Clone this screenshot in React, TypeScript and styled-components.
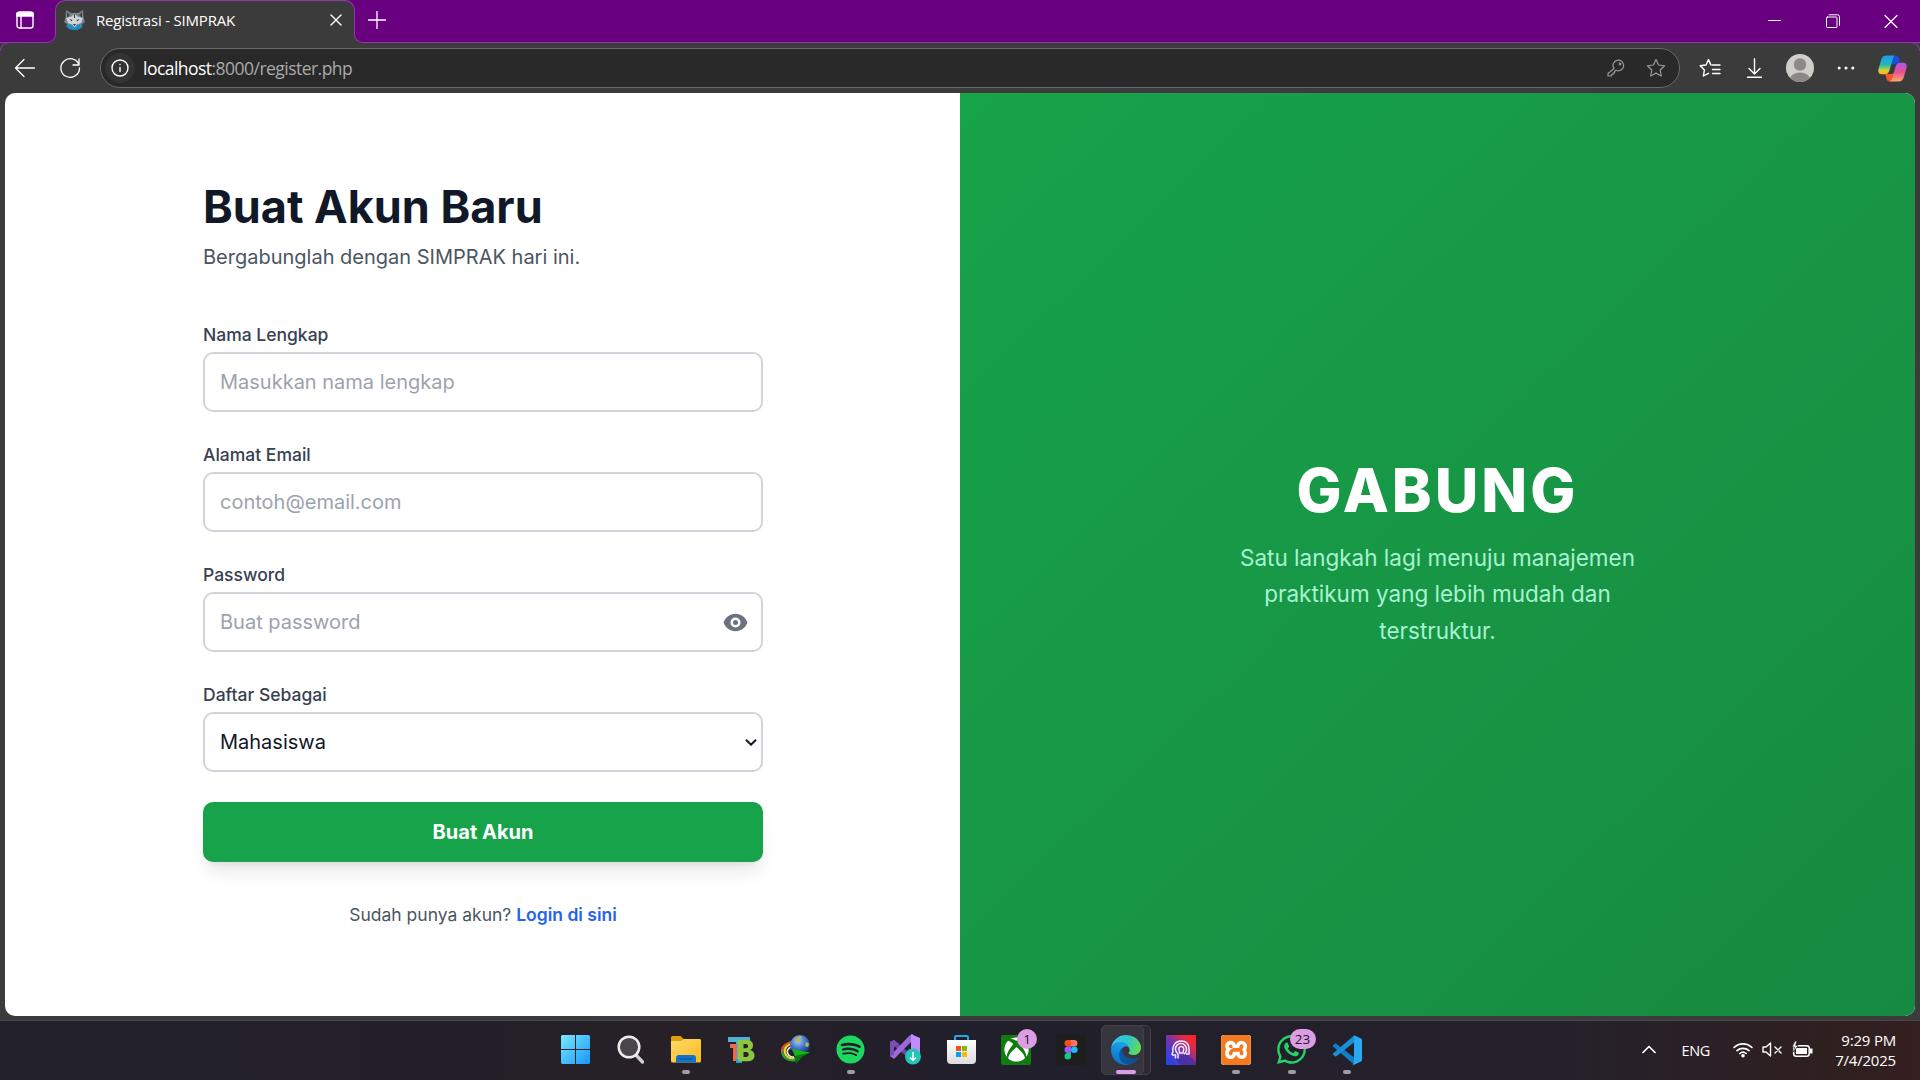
import React from "react";
import styled, { createGlobalStyle } from "styled-components";
import { FaSpotify, FaWhatsapp, FaXbox } from "react-icons/fa";
import { SiXampp } from "react-icons/si";

const GlobalStyle = createGlobalStyle`
  *, *::before, *::after { box-sizing: border-box; }
  body { margin: 0; background: #3b3b3b; overflow: hidden; }
  svg { display: block; flex: none; }
`;

const systemFont = `"Open Sans", "Noto Sans", sans-serif`;
const accent = "#690080";
const accentLine = "#8f3aa6";
const chrome = "#3b3b3b";

const Screen = styled.div`
  width: 1920px;
  height: 1080px;
  display: flex;
  flex-direction: column;
  background: ${chrome};
  font-family: ${systemFont};
  color: #fff;
`;

/* ---------- browser chrome ---------- */

const TitleBar = styled.header`
  height: 43px;
  display: flex;
  background: ${chrome};
`;

const TabActions = styled.div`
  width: 56px;
  height: 43px;
  padding: 11px 0 0 16px;
  background: ${accent};
  border: solid ${accentLine};
  border-width: 0 1px 1px 0;
  border-bottom-right-radius: 9px;
`;

const TabSlot = styled.div`
  position: relative;
  width: 300px;
  height: 34px;
  margin: 0 -1px;
  background: ${accent};
`;

const Tab = styled.div`
  height: 34px;
  display: flex;
  align-items: center;
  padding: 5px 12px 0 8px;
  background: ${chrome};
  border: solid ${accentLine};
  border-width: 1px 1px 0;
  border-radius: 10px 10px 0 0;
`;

const TabTitle = styled.span`
  flex: 1;
  margin-left: 11px;
  margin-top: -1px;
  font-size: 15px;
  line-height: 20px;
  letter-spacing: -0.2px;
  white-space: nowrap;
`;

const DragArea = styled.div`
  flex: 1;
  height: 43px;
  display: flex;
  justify-content: space-between;
  padding: 11px 22px 0 13px;
  background: ${accent};
  border: solid ${accentLine};
  border-width: 0 0 1px 1px;
  border-bottom-left-radius: 9px;
`;

const WindowControls = styled.div`
  display: flex;
  gap: 44px;
  padding-top: 3px;
`;

const Toolbar = styled.div`
  position: relative;
  height: 50px;
  display: flex;
  align-items: center;
  padding: 0 13px 0 14px;

  &::before, &::after {
    content: "";
    position: absolute;
    top: -1px;
    width: 9px;
    height: 9px;
    background: ${chrome};
    border-top: 1px solid ${accentLine};
  }
  &::before { left: 0; border-left: 1px solid ${accentLine}; border-top-left-radius: 9px; }
  &::after { right: 0; border-right: 1px solid ${accentLine}; border-top-right-radius: 9px; }
`;

const NavButtons = styled.div`
  display: flex;
  gap: 23px;
  margin-right: 19px;
`;

const AddressBar = styled.div`
  width: 1580px;
  height: 40px;
  display: flex;
  align-items: center;
  padding: 0 13px 0 4px;
  background: #292929;
  border: 1px solid #6a6a6a;
  border-radius: 20px;
`;

const SiteInfo = styled.span`
  width: 30px;
  height: 30px;
  display: flex;
  align-items: center;
  justify-content: center;
  border-radius: 50%;
  background: #333;
`;

const Url = styled.span`
  flex: 1;
  margin: -1px 0 0 8px;
  font-size: 17.5px;
  line-height: 24px;
  letter-spacing: -0.53px;
  color: #a9a9a9;
  b { font-weight: 400; color: #fff; }
`;

const AddressIcons = styled.div`
  display: flex;
  align-items: center;
  gap: 21px;
`;

const ToolbarIcons = styled.div`
  flex: 1;
  display: flex;
  align-items: center;
  justify-content: space-between;
  margin-left: 19px;
`;

/* ---------- page ---------- */

const Page = styled.main`
  height: 923px;
  margin: 0 5px;
  display: grid;
  grid-template-columns: 1fr 1fr;
  border-radius: 10px;
  overflow: hidden;
  background: #fff;
  font-family: Inter, sans-serif;
`;

const FormSide = styled.section`
  display: flex;
  flex-direction: column;
  align-items: center;
  justify-content: center;
  padding-left: 1px;
`;

const FormBox = styled.div`
  width: 560px;
`;

const Heading = styled.h1`
  margin: 0;
  font-size: 45px;
  line-height: 50px;
  font-weight: 700;
  color: #111827;
`;

const Subheading = styled.p`
  margin: 10px 0 50px;
  font-size: 20px;
  line-height: 30px;
  color: #4b5563;
`;

const Form = styled.form`
  display: flex;
  flex-direction: column;
  gap: 30px;
`;

const Field = styled.label`
  display: flex;
  flex-direction: column;
  gap: 5px;
`;

const FieldName = styled.span`
  font-size: 17.5px;
  line-height: 25px;
  font-weight: 500;
  color: #374151;
`;

const Control = styled.span<{ $trail: number }>`
  height: 60px;
  display: flex;
  align-items: center;
  padding: 0 ${(p) => p.$trail}px 0 15px;
  border: 2px solid #d1d5db;
  border-radius: 10px;

  input, select {
    flex: 1;
    min-width: 0;
    padding: 0;
    border: 0;
    outline: 0;
    appearance: none;
    background: transparent;
    font: 400 20px/30px Inter, sans-serif;
    color: #111827;
  }
  input::placeholder { color: #9ca3af; opacity: 1; }
`;

const Submit = styled.button`
  height: 60px;
  padding: 0;
  border: 0;
  border-radius: 10px;
  background: #16a34a;
  color: #fff;
  font: 700 20px/30px Inter, sans-serif;
  box-shadow: 0 12.5px 19px -4px rgba(0, 0, 0, 0.1), 0 5px 7.5px -5px rgba(0, 0, 0, 0.1);
`;

const LoginHint = styled.p`
  margin: 40px 0 0;
  text-align: center;
  font-size: 17.5px;
  line-height: 25px;
  color: #4b5563;
  a { font-weight: 600; color: #2563eb; text-decoration: none; }
`;

const Promo = styled.section`
  display: flex;
  flex-direction: column;
  align-items: center;
  justify-content: center;
  text-align: center;
  background: linear-gradient(to bottom right, #17a34a, #178a41);
`;

const PromoTitle = styled.h2`
  margin: 0;
  font-size: 60px;
  line-height: 60px;
  font-weight: 800;
  letter-spacing: 3px;
`;

const PromoText = styled.p`
  width: 400px;
  margin: 20px 0 0;
  font-size: 22.5px;
  line-height: 36.56px;
  color: #a7f3d0;
`;

/* ---------- taskbar ---------- */

const Taskbar = styled.footer`
  height: 60px;
  margin-top: 4px;
  display: grid;
  grid-template-columns: 1fr auto 1fr;
  border-top: 1px solid #48474a;
  background: linear-gradient(90deg, #22212b 0%, #231f28 25%, #272027 34%, #211f2b 50%, #24212b 80%, #2a2027 88%, #30201f 96%, #351f20 100%);
`;

const AppList = styled.nav`
  grid-column: 2;
  display: flex;
  padding-left: 2px;
`;

const AppSlot = styled.div`
  position: relative;
  width: 55.1px;
  height: 57px;
  display: flex;
  align-items: center;
  justify-content: center;
`;

const ActivePlate = styled.span<{ $back?: boolean }>`
  position: absolute;
  top: 4px;
  left: ${(p) => (p.$back ? 9 : 2)}px;
  width: 43px;
  height: 50px;
  border-radius: 5px;
  border: 1px solid #434049;
  background: ${(p) => (p.$back ? "#2b2932" : "#37353d")};
`;

const AppIcon = styled.span`
  position: relative;
  width: 30px;
  height: 30px;
  display: flex;
  align-items: center;
  justify-content: center;
`;

const Indicator = styled.span<{ $active?: boolean }>`
  position: absolute;
  left: 50%;
  bottom: 4px;
  width: ${(p) => (p.$active ? 20 : 8)}px;
  height: 4px;
  transform: translateX(-50%);
  border-radius: 2px;
  background: ${(p) => (p.$active ? "#db9fe6" : "#a09ea4")};
`;

const Badge = styled.span<{ $width: number }>`
  position: absolute;
  top: -6px;
  left: ${(p) => (p.$width > 20 ? 13 : 16)}px;
  width: ${(p) => p.$width}px;
  height: 20px;
  border-radius: 10px;
  background: #dc9de5;
  color: #201824;
  font-size: 13.5px;
  line-height: 20px;
  text-align: center;
`;

const Tray = styled.div`
  grid-column: 3;
  justify-self: end;
  display: flex;
  align-items: center;
  height: 57px;
  padding-right: 24px;
`;

const Language = styled.span`
  margin: 1px 23px 0 26px;
  font-size: 14.5px;
  letter-spacing: -0.3px;
`;

const TrayIcons = styled.div`
  display: flex;
  align-items: center;
  gap: 9px;
  margin-right: 22px;
`;

const Clock = styled.div`
  text-align: right;
  font-size: 15px;
  line-height: 20px;
  letter-spacing: -0.2px;
  white-space: nowrap;
`;

/* ---------- icons ---------- */

type LineProps = { w: number; h: number; color?: string; stroke?: number; children: React.ReactNode };
const Line = ({ w, h, color = "#fff", stroke = 1.3, children }: LineProps) => (
  <svg width={w} height={h} viewBox={`0 0 ${w} ${h}`} fill="none" stroke={color} strokeWidth={stroke} strokeLinecap="round" strokeLinejoin="round">
    {children}
  </svg>
);

const WolfIcon = () => (
  <svg width="21" height="20" viewBox="0 0 21 20">
    <path d="M2 0l5 3h7l5-3 .6 8 1.4 4-3 2-1 4-6.500 2L4 18l-1-4-3-2 1.500-4z" fill="#77858c" />
    <path d="M3 2l3 3-3 3zM18 2l-3 3 3 3z" fill="#3d444b" />
    <path d="M2 15.500l5-1 3.500 2 3.500-2 5 1c-1.500 3-4.500 4.500-8.500 4.500S3.500 18.500 2 15.500z" fill="#1c8fc9" />
    <path d="M10.500 3.500l3 3 5.500 1.500-2 5-4 1.500-2.500 3-2.500-3-4-1.500-2-5 5.500-1.500z" fill="#cfd4d7" />
    <path d="M5.500 9l3 1-1 1.200zM15.500 9l-3 1 1 1.200zM9 14h3l-1.500 2zM10 4h1v4h-1z" fill="#27323a" />
  </svg>
);

const star = "M10 1.500l2.600 5.500 6 .8-4.400 4.200 1.100 6-5.300-2.900-5.300 2.900 1.100-6L1.400 7.800l6-.8z";

const CopilotIcon = () => (
  <svg width="29" height="27" viewBox="0 0 29 27">
    <defs>
      <linearGradient id="cpA" x1="0" y1="0" x2="0" y2="1"><stop stopColor="#1b9cf0" /><stop offset=".5" stopColor="#26b8b4" /><stop offset=".8" stopColor="#d8d22c" /><stop offset="1" stopColor="#f7b51c" /></linearGradient>
      <linearGradient id="cpB" x1="0" y1="0" x2="0" y2="1"><stop stopColor="#a65be8" /><stop offset=".5" stopColor="#ec4f92" /><stop offset="1" stopColor="#ffac68" /></linearGradient>
    </defs>
    <path d="M13 1h5.500c2.500 0 2.500 3 3.500 6l-4 2-5 1z" fill="#1b4fdb" />
    <path d="M7 19h7l3-2-2 7c-.6 2-1.500 2.500-3 2.500-4 0-3-3.500-5-7.500z" fill="#f4562c" />
    <path d="M8.500.5H18c-2 0-2.700 1.500-3.300 3.500L11.500 15c-.9 3-2 4.300-4.500 4.300H3.500C.8 19.300-.2 17 .5 14L3.300 4.500C4.200 1.600 5.600.5 8.500.5z" fill="url(#cpA)" />
    <path d="M20.500 26.500H11c2 0 2.700-1.500 3.300-3.500l3.200-11c.9-3 2-4.300 4.500-4.300h3.500c2.700 0 3.700 2.300 3 5.300l-2.800 9.500c-.9 2.900-2.300 4-5.200 4z" fill="url(#cpB)" />
  </svg>
);

const WindowsIcon = () => (
  <svg width="29" height="29" viewBox="0 0 29 29">
    <defs><linearGradient id="win" gradientUnits="userSpaceOnUse" x1="0" y1="0" x2="29" y2="29"><stop stopColor="#7be8fc" /><stop offset="1" stopColor="#1597fb" /></linearGradient></defs>
    <path d="M1 0h13v14H0V1zM15 0h13l1 1v13H15zM0 15h14v14H1l-1-1zM15 15h14v13l-1 1H15z" fill="url(#win)" />
  </svg>
);

const SearchIcon = () => (
  <svg width="28" height="29" viewBox="-1 0 28 29">
    <path d="M18.500 19.500l7 7.500" stroke="#cfcfd1" strokeWidth="3.400" strokeLinecap="round" />
    <circle cx="12" cy="12" r="10.300" fill="#4a4549" stroke="#ececed" strokeWidth="2.500" />
  </svg>
);

const FolderIcon = () => (
  <svg width="30" height="27" viewBox="0 0 30 27">
    <defs><linearGradient id="fol" x1="0" y1="0" x2="1" y2="1"><stop stopColor="#ffdb6b" /><stop offset="1" stopColor="#fcba1c" /></linearGradient></defs>
    <path d="M0 1.500Q0 0 1.500 0H9.500l3 3H28.500Q30 3 30 4.500V12H0z" fill="#e0a00b" />
    <path d="M0 5h10l3-2h15.500Q30 3 30 4.500V25q0 1.500-1.500 1.500h-27Q0 26.500 0 25z" fill="url(#fol)" />
    <path d="M5 26.500V22q0-3 3-3h14q3 0 3 3v4.500z" fill="#0f74ca" />
    <path d="M8.500 23h13" stroke="#0a4b91" />
  </svg>
);

const TbIcon = () => (
  <svg width="28" height="28" viewBox="0 0 28 28">
    <path d="M1 1h22v5H15v21H9V6H1z" fill="#55b1d3" />
    <path d="M3 8h7v17H6V12H3z" fill="#e8694b" />
    <path d="M9 23h6v4H9z" fill="#14a5dc" />
    <path fillRule="evenodd" d="M11 4h8.500c4.500 0 6.500 2 6.500 5.300 0 2.500-1 4-3 4.700 3 .7 4.500 2.500 4.500 5.500 0 4-2.800 5.800-7.500 5.800H11zM16.500 8v4.300h2.300c3 0 3-4.300 0-4.300zM16.500 16v5h2.600c3.500 0 3.500-5 0-5z" fill="#8cc63f" />
  </svg>
);

const GlobeIcon = () => (
  <svg width="30" height="29" viewBox="0 0 30 29">
    <defs><radialGradient id="glb" cx=".4" cy=".3" r=".7"><stop stopColor="#a9cdf5" /><stop offset=".5" stopColor="#477bd0" /><stop offset="1" stopColor="#16316f" /></radialGradient></defs>
    <path d="M12 7.500C5 9 1 13 1.500 18c.8 5 6 8 12.500 7" fill="none" stroke="#27a33a" strokeWidth="2.500" />
    <path d="M12 8C6 10 3 13.500 4 18c1 4 5 6 9.500 5" fill="none" stroke="#f1d42c" strokeWidth="2.200" />
    <path d="M12 6.500C5 7.500 0 12 1 17.500" fill="none" stroke="#e64733" strokeWidth="2" />
    <path d="M12 11c-5 2-7 5-5 8 1 2 3 3 6 3" fill="none" stroke="#eee" strokeWidth="1.600" />
    <circle cx="19" cy="10" r="10" fill="url(#glb)" />
    <path d="M15 3.500c2-2 4-2.500 6-1.500l-2 2.500 1 2-3.500 1-2-1.500zM25 7l3 1.500-1 3.500-3-1z" fill="#b5b85b" />
    <path d="M11 14l18 3.500-8 4-6 7-1-7z" fill="#16b51d" />
    <path d="M14 21l15-3.500-8 4-6 7z" fill="#08760e" />
  </svg>
);

const VisualStudioIcon = () => (
  <svg width="31" height="31" viewBox="0 0 31 31">
    <path d="M0 8l4-2 21 18-4 2L4 12v12l-4-2z" fill="#7045ad" />
    <path d="M0 22l4 3L23 6V0L19 2z" fill="#9b69d9" />
    <path d="M0 8l4-2 5 4-5 3v8l-4 1z" fill="#7950b8" />
    <path d="M21 0l9 4v21l-9 4z" fill="#c18cff" />
    <circle cx="23" cy="22.500" r="8" fill="#22c6b7" />
    <path d="M23 18v8.500m-3-3l3 3 3-3" fill="none" stroke="#fff" strokeWidth="1.500" />
  </svg>
);

const StoreIcon = () => (
  <svg width="29" height="29" viewBox="0 0 29 29">
    <defs><linearGradient id="sto" x1="0" y1="0" x2="0" y2="1"><stop stopColor="#fff" /><stop offset="1" stopColor="#dcdcdf" /></linearGradient></defs>
    <path d="M8 6V2q0-1 1-1h11q1 0 1 1v4" fill="none" stroke="#22a7e8" strokeWidth="2" />
    <path d="M0 5h29v20q0 4-4 4H4q-4 0-4-4z" fill="url(#sto)" />
    <path d="M9 11h5v5H9z" fill="#f25022" /><path d="M15 11h5v5h-5z" fill="#7fba00" />
    <path d="M9 17h5v5H9z" fill="#00a4ef" /><path d="M15 17h5v5h-5z" fill="#ffb900" />
  </svg>
);

const GreenTile = styled.span`
  width: 30px;
  height: 30px;
  display: flex;
  align-items: center;
  justify-content: center;
  border-radius: 2px;
  background: #107c10;
  color: #fff;
`;

const FigmaIcon = () => (
  <svg width="30" height="30" viewBox="0 0 30 30">
    <rect width="30" height="30" rx="2" fill="#1e1e1e" />
    <path d="M15 5h-3.200a3.250 3.250 0 000 6.500H15z" fill="#f24e1e" />
    <path d="M15 5h3.200a3.250 3.250 0 010 6.500H15z" fill="#ff7262" />
    <path d="M15 11.500h-3.200a3.250 3.250 0 000 6.500H15z" fill="#a259ff" />
    <circle cx="18.300" cy="14.750" r="3.250" fill="#1abcfe" />
    <path d="M15 18h-3.200A3.250 3.250 0 1015 21.300z" fill="#0acf83" />
  </svg>
);

const EdgeIcon = () => (
  <svg width="30" height="30" viewBox="0 0 256 256">
    <defs>
      <linearGradient id="eA" x1="0" x2="1"><stop stopColor="#0c59a4" /><stop offset="1" stopColor="#114a8b" /></linearGradient>
      <linearGradient id="eB" x1=".6" y1=".2" x2=".3" y2="1"><stop stopColor="#1b9de2" /><stop offset="1" stopColor="#0670cc" /></linearGradient>
      <linearGradient id="eC" x1="0" y1=".3" x2="1" y2=".6"><stop stopColor="#35c1f1" /><stop offset=".5" stopColor="#2fc6c9" /><stop offset="1" stopColor="#66dc4d" /></linearGradient>
    </defs>
    <path d="M231 190.500c-3.400 1.800-6.900 3.400-10.500 4.700a101.900 101.900 0 01-35.900 6.500c-47.300 0-88.500-32.500-88.500-74.300a31.500 31.500 0 0116.400-27.300c-42.800 1.800-53.800 46.400-53.800 72.500 0 74 68.100 81.400 82.800 81.400 7.900 0 19.800-2.300 27-4.600l1.300-.4a128.300 128.300 0 0066.600-52.800 4 4 0 00-5.400-5.700z" fill="url(#eA)" />
    <path d="M105.700 241.400a79.200 79.200 0 01-22.700-21.300 80.700 80.700 0 0129.500-120c3.200-1.500 8.500-4.100 15.600-4a32.400 32.400 0 0125.700 13 31.900 31.900 0 016.300 18.700c0-.2 24.500-79.600-80-79.600-43.900 0-80 41.600-80 78.200a130.200 130.200 0 0012.100 56 128 128 0 00156.400 67 75.500 75.500 0 01-62.800-8z" fill="url(#eB)" />
    <path d="M152.300 148.900c-.9 1-3.300 2.500-3.300 5.700 0 2.600 1.700 5.200 4.800 7.300 14.300 10 41.400 8.600 41.500 8.600a59.600 59.600 0 0030.300-8.300 61.400 61.400 0 0030.400-52.900c.3-22.400-8-37.300-11.300-43.900C223.500 23.900 177.700 0 128 0A128 128 0 000 126.200c.5-36.500 36.800-66 80-66 3.500 0 23.500.3 42 10.100 16.300 8.600 24.900 18.900 30.800 29.200 6.200 10.700 7.300 24.100 7.300 29.500s-2.700 13.300-7.800 19.900z" fill="url(#eC)" />
  </svg>
);

const HeadTileIcon = () => (
  <svg width="30" height="30" viewBox="0 0 30 30">
    <defs><linearGradient id="hd" x1="0" y1="1" x2="1" y2="0"><stop stopColor="#1746f4" /><stop offset=".45" stopColor="#6b35b4" /><stop offset=".8" stopColor="#f12836" /><stop offset="1" stopColor="#fb2222" /></linearGradient></defs>
    <rect width="30" height="30" fill="url(#hd)" />
    <path d="M21 19l4 3 5 5v3H15l-6-7z" fill="#3f2c9c" opacity=".6" />
    <g fill="none" stroke="#f3eaff" strokeWidth="1.500" strokeLinejoin="round">
      <path d="M9.500 23.500V20H6.500l-.5-1 1-2c-1-7 3-11 8-11s8 3 8 8v5h-3" />
      <path d="M12 23.500V19c-2-1.500-2.500-3-2.500-5a5.500 5.500 0 0111 0c0 2-.5 4-2.500 5" />
      <path d="M13.500 18v-1.500c-1.500-3-.5-5 1.800-5s3.300 2 1.800 5V18z" />
    </g>
  </svg>
);

const OrangeTile = styled.span`
  width: 30px;
  height: 30px;
  display: flex;
  border-radius: 3px;
  overflow: hidden;
  background: #fff;
  color: #f47a20;
`;

const VsCodeIcon = () => (
  <svg width="30" height="30" viewBox="0 0 30 30">
    <path d="M1 10.500l2-1.700q.7-.4 1.400 0L22 22.500v7L1 11.500q-.5-.5 0-1z" fill="#0f7fc9" />
    <path d="M1 19.500l2 1.700q.7.400 1.400 0L22 7.500v-7L1 18.500q-.5.500 0 1z" fill="#1a8fd8" />
    <path d="M22 .3l7 3.200q1 .5 1 1.500v20q0 1-1 1.500l-7 3.200q-1 .3-1.500-.4L22 28z" fill="#2aa9f3" />
  </svg>
);

type AppEntry = { icon: React.ReactNode; running?: boolean; active?: boolean; badge?: string };
const apps: AppEntry[] = [
  { icon: <WindowsIcon /> },
  { icon: <SearchIcon /> },
  { icon: <FolderIcon />, running: true },
  { icon: <TbIcon /> },
  { icon: <GlobeIcon /> },
  { icon: <FaSpotify size={29} color="#1ed760" />, running: true },
  { icon: <VisualStudioIcon /> },
  { icon: <StoreIcon /> },
  { icon: <GreenTile><FaXbox size={25} /></GreenTile>, badge: "1" },
  { icon: <FigmaIcon /> },
  { icon: <EdgeIcon />, running: true, active: true },
  { icon: <HeadTileIcon /> },
  { icon: <OrangeTile><SiXampp size={30} /></OrangeTile>, running: true },
  { icon: <FaWhatsapp size={33} color="#25d366" />, running: true, badge: "23" },
  { icon: <VsCodeIcon />, running: true },
];

const TextField = ({ label, hint, children }: { label: string; hint: string; children?: React.ReactNode }) => (
  <Field>
    <FieldName>{label}</FieldName>
    <Control $trail={13}>
      <input placeholder={hint} />
      {children}
    </Control>
  </Field>
);

export default function App() {
  return (
    <Screen>
      <GlobalStyle />
      <TitleBar>
        <TabActions>
          <Line w={18} h={18} stroke={1.4}>
            <rect x="1" y="1" width="16" height="16" rx="2.500" />
            <path d="M1 2h16v3H1z" fill="#fff" />
            <path d="M5 5v12" />
          </Line>
        </TabActions>
        <TabSlot>
          <Tab>
            <WolfIcon />
            <TabTitle>Registrasi - SIMPRAK</TabTitle>
            <Line w={12} h={12} stroke={1.4}><path d="M1 1l10 10M11 1L1 11" /></Line>
          </Tab>
        </TabSlot>
        <DragArea>
          <Line w={18} h={18}><path d="M9 .5v17M.5 9h17" /></Line>
          <WindowControls>
            <Line w={14} h={14} stroke={1}><path d="M.5 6.500h12" /></Line>
            <Line w={14} h={14} stroke={1}>
              <rect x=".5" y="3" width="10.500" height="10.500" rx="1" />
              <path d="M3 .8h8.500q2 0 2 2v8.500" />
            </Line>
            <Line w={14} h={14} stroke={1.2}><path d="M1 1.500l12 12M13 1.500l-12 12" /></Line>
          </WindowControls>
        </DragArea>
      </TitleBar>
      <Toolbar>
        <NavButtons>
          <Line w={22} h={20}><path d="M1.500 10h19M10 1.500L1.500 10l8.500 8.500" /></Line>
          <Line w={22} h={20}><path d="M20 7A9.300 9.300 0 1020.500 10M20 1v6h-6" /></Line>
        </NavButtons>
        <AddressBar>
          <SiteInfo>
            <Line w={18} h={18} stroke={1.4}><circle cx="9" cy="9" r="8" /><path d="M9 8.500v4M9 5.500v.1" /></Line>
          </SiteInfo>
          <Url><b>localhost</b>:8000/register.php</Url>
          <AddressIcons>
            <Line w={18} h={18} color="#9a9a9a" stroke={1.2}>
              <path d="M7 9.500A5.300 5.300 0 119 11.200L7.500 12.500v1.500H6v1.500H4.500V17H1v-2.500z" />
              <circle cx="13" cy="5" r=".8" />
            </Line>
            <Line w={20} h={20} color="#9a9a9a" stroke={1.2}><path d={star} /></Line>
          </AddressIcons>
        </AddressBar>
        <ToolbarIcons>
          <Line w={22} h={20} stroke={1.4}>
            <path d="M12 6.800h-.3L9.500 1.500 7 7l-5.800.8 4.200 4.200-1 6 5.100-2.700M9.500 1.500L12 7M13.500 7H21M13.500 11.500H21M13.500 15.500H21" />
          </Line>
          <Line w={18} h={20} stroke={1.4}><path d="M10.500 .8v15M5 10.500l5.500 5.500 5.500-5.500M3.500 19.200h14" /></Line>
          <svg width="28" height="28" viewBox="0 0 28 28">
            <defs><clipPath id="av"><circle cx="14" cy="14" r="14" /></clipPath></defs>
            <g clipPath="url(#av)">
              <rect width="28" height="28" fill="#d0cecb" />
              <circle cx="14" cy="10.500" r="6.200" fill="#8b8885" />
              <ellipse cx="14" cy="25.500" rx="10" ry="7" fill="#8b8885" />
            </g>
          </svg>
          <svg width="18" height="4" viewBox="0 0 18 4" fill="#fff">
            <circle cx="2.200" cy="2" r="1.500" /><circle cx="9" cy="2" r="1.500" /><circle cx="15.800" cy="2" r="1.500" />
          </svg>
          <CopilotIcon />
        </ToolbarIcons>
      </Toolbar>

      <Page>
        <FormSide>
          <FormBox>
            <Heading>Buat Akun Baru</Heading>
            <Subheading>Bergabunglah dengan SIMPRAK hari ini.</Subheading>
            <Form>
              <TextField label="Nama Lengkap" hint="Masukkan nama lengkap" />
              <TextField label="Alamat Email" hint="contoh@email.com" />
              <TextField label="Password" hint="Buat password">
                <svg width="25" height="25" viewBox="0 0 20 20" fill="#6b7280">
                  <path d="M10 12a2 2 0 100-4 2 2 0 000 4z" />
                  <path fillRule="evenodd" d="M.458 10C1.732 5.943 5.522 3 10 3s8.268 2.943 9.542 7c-1.274 4.057-5.064 7-9.542 7S1.732 14.057.458 10zM14 10a4 4 0 11-8 0 4 4 0 018 0z" clipRule="evenodd" />
                </svg>
              </TextField>
              <Field>
                <FieldName>Daftar Sebagai</FieldName>
                <Control $trail={4}>
                  <select defaultValue="mahasiswa"><option value="mahasiswa">Mahasiswa</option></select>
                  <svg width="12" height="8" viewBox="0 0 12 8" fill="none" stroke="#111827" strokeWidth="2">
                    <path d="M1 1.700l5 5 5-5" />
                  </svg>
                </Control>
              </Field>
              <Submit type="button">Buat Akun</Submit>
            </Form>
            <LoginHint>Sudah punya akun? <a>Login di sini</a></LoginHint>
          </FormBox>
        </FormSide>
        <Promo>
          <PromoTitle>GABUNG</PromoTitle>
          <PromoText>Satu langkah lagi menuju manajemen praktikum yang lebih mudah dan terstruktur.</PromoText>
        </Promo>
      </Page>

      <Taskbar>
        <AppList>
          {apps.map((app, i) => (
            <AppSlot key={i}>
              {app.active && <><ActivePlate $back /><ActivePlate /></>}
              <AppIcon>
                {app.icon}
                {app.badge && <Badge $width={app.badge.length > 1 ? 26 : 20}>{app.badge}</Badge>}
              </AppIcon>
              {app.running && <Indicator $active={app.active} />}
            </AppSlot>
          ))}
        </AppList>
        <Tray>
          <Line w={14} h={9} stroke={1.7}><path d="M1 7.500l6-6 6 6" /></Line>
          <Language>ENG</Language>
          <TrayIcons>
            <Line w={20} h={16} stroke={1.6}>
              <path d="M1 5.500a13 13 0 0118 0M4 8.700a9 9 0 0112 0M6.800 11.500a5 5 0 016.400 0" />
              <circle cx="10" cy="13.800" r="1" fill="#fff" />
            </Line>
            <Line w={21} h={15} stroke={1.4}>
              <path d="M1 5h3l4.500-4v13L4 10H1zM13 5l6 6M19 5l-6 6" />
            </Line>
            <svg width="21" height="17" viewBox="0 0 21 17">
              <rect x="1.700" y="4.700" width="15.500" height="10.600" rx="2.500" fill="none" stroke="#fff" strokeWidth="1.500" />
              <path d="M4 7h11v6H4zM18 7.500h2.500v5H18z" fill="#fff" />
              <path d="M3 0L0 6h2.500L1.500 11 6 4.500H3.500L5 0z" fill="#fff" stroke="#28202a" strokeWidth=".7" />
            </svg>
          </TrayIcons>
          <Clock>9:29 PM<br />7/4/2025</Clock>
        </Tray>
      </Taskbar>
    </Screen>
  );
}
